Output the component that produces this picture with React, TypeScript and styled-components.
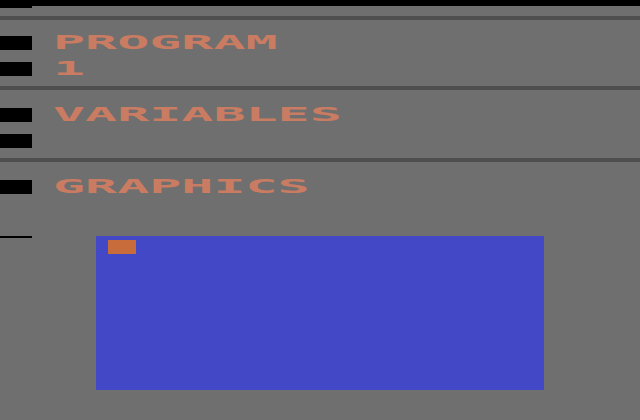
import React from "react";
import styled, { createGlobalStyle } from "styled-components";

const Global = createGlobalStyle`
  html, body {
    margin: 0;
    padding: 0;
    background: #6f6f6f;
  }
  #root {
    width: 640px;
    height: 420px;
    overflow: hidden;
  }
`;

const Screen = styled.div`
  width: 640px;
  height: 420px;
  background: #6f6f6f;
  display: flex;
  flex-direction: column;
`;

const TopBar = styled.div`
  display: flex;
  align-items: flex-start;
  height: 16px;
`;

const TopCap = styled.div<{ $w?: number; $h: number }>`
  background: #000;
  height: ${(p) => p.$h}px;
  ${(p) => (p.$w ? `width: ${p.$w}px;` : "flex: 1;")}
`;

const Divider = styled.div`
  height: 4px;
  background: #4f4f4f;
`;

const Section = styled.div<{ $top: number; $bottom: number }>`
  display: flex;
  flex-direction: column;
  gap: 12px;
  padding-top: ${(p) => p.$top}px;
  padding-bottom: ${(p) => p.$bottom}px;
`;

const Row = styled.div`
  display: flex;
  align-items: center;
  height: 14px;
  gap: 21px;
`;

const Marker = styled.div<{ $on: boolean }>`
  width: 32px;
  height: 14px;
  background: ${(p) => (p.$on ? "#000" : "transparent")};
  flex: none;
`;

const Label = styled.span`
  display: inline-block;
  font-family: "DejaVu Sans Mono", "Liberation Mono", monospace;
  font-weight: bold;
  font-size: 19.6px;
  line-height: 14px;
  height: 14px;
  color: #c97c62;
  white-space: pre;
  transform: scaleX(2.72);
  transform-origin: left center;
`;

const CanvasRow = styled.div`
  display: flex;
  align-items: flex-start;
  margin-top: 42px;
  gap: 64px;
`;

const Rule = styled.div`
  width: 32px;
  height: 2px;
  background: #000;
`;

const Playfield = styled.div`
  width: 448px;
  height: 154px;
  background: #4248c6;
  padding: 4px 12px;
  box-sizing: border-box;
`;

const Sprite = styled.div`
  width: 28px;
  height: 14px;
  background: #c76c3a;
`;

const lines: { text: string; marker: boolean }[][] = [
  [
    { text: "PROGRAM", marker: true },
    { text: "1", marker: true },
  ],
  [
    { text: "VARIABLES", marker: true },
    { text: "", marker: true },
  ],
];

export default function App() {
  return (
    <>
      <Global />
      <Screen>
        <TopBar>
          <TopCap $w={32} $h={8} />
          <TopCap $h={6} />
        </TopBar>
        <Divider />
        <Section $top={16} $bottom={10}>
          {lines[0].map((l, i) => (
            <Row key={i}>
              <Marker $on={l.marker} />
              <Label>{l.text}</Label>
            </Row>
          ))}
        </Section>
        <Divider />
        <Section $top={18} $bottom={10}>
          {lines[1].map((l, i) => (
            <Row key={i}>
              <Marker $on={l.marker} />
              <Label>{l.text}</Label>
            </Row>
          ))}
        </Section>
        <Divider />
        <Section $top={18} $bottom={0}>
          <Row>
            <Marker $on />
            <Label>GRAPHICS</Label>
          </Row>
        </Section>
        <CanvasRow>
          <Rule />
          <Playfield>
            <Sprite />
          </Playfield>
        </CanvasRow>
      </Screen>
    </>
  );
}
